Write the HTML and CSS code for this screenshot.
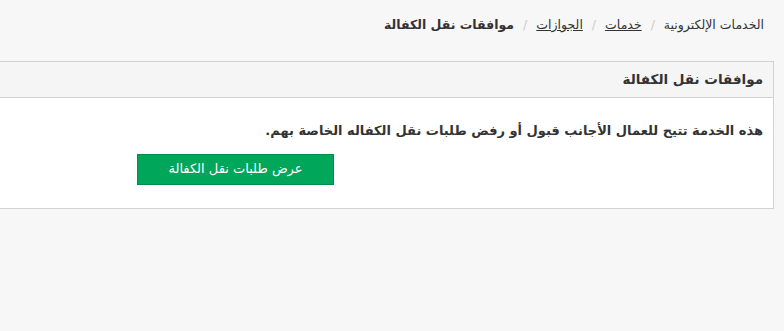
FILE: index.html
```html
<!DOCTYPE html>
<html lang="ar" dir="rtl">
<head>
<meta charset="utf-8">
<link rel="stylesheet" href="styles.css">
</head>
<body>
<div class="page">
  <ol class="breadcrumb">
    <li class="crumb">الخدمات الإلكترونية</li>
    <li class="sep">/</li>
    <li class="crumb"><a href="#">خدمات</a></li>
    <li class="sep">/</li>
    <li class="crumb"><a href="#">الجوازات</a></li>
    <li class="sep">/</li>
    <li class="crumb active">موافقات نقل الكفالة</li>
  </ol>
  <div class="panel">
    <div class="panel-heading">موافقات نقل الكفالة</div>
    <div class="panel-body">
      <p class="desc">هذه الخدمة تتيح للعمال الأجانب قبول أو رفض طلبات نقل الكفاله الخاصة بهم.</p>
      <div class="actions"><a class="btn" href="#">عرض طلبات نقل الكفالة</a></div>
    </div>
  </div>
</div>
</body>
</html>
```
FILE: styles.css
```css
html, body {
  margin: 0;
  padding: 0;
  background: #f7f7f7;
}
body {
  font-family: "DejaVu Sans", "Noto Sans", sans-serif;
  color: #333;
  direction: rtl;
}
.page {
  padding: 0 10px 0 0;
}
.breadcrumb {
  list-style: none;
  margin: 0;
  padding: 16px 10px 0 0;
  height: 61px;
  box-sizing: border-box;
  display: flex;
  gap: 9px;
  font-size: 12.5px;
  line-height: 18px;
}
.breadcrumb a {
  color: #333;
  text-decoration: underline;
}
.sep {
  color: #ccc;
}
.active {
  font-weight: bold;
}
.panel {
  margin-left: -10px;
  border: 1px solid #d2d2d2;
  background: #fff;
}
.panel-heading {
  background: #f5f5f5;
  border-bottom: 1px solid #d2d2d2;
  height: 36px;
  box-sizing: border-box;
  padding: 7px 10px 0 0;
  font-size: 13.5px;
  font-weight: bold;
  line-height: 20px;
}
.panel-body {
  padding: 23px 10px 23px 0;
}
.desc {
  margin: 0 0 13px 0;
  font-size: 13px;
  font-weight: bold;
  line-height: 20px;
}
.actions {
  display: flex;
}
.btn {
  display: inline-block;
  margin-right: 429px;
  width: 197px;
  height: 31px;
  box-sizing: border-box;
  background: #00a65a;
  border: 1px solid #008d4c;
  color: #fff;
  text-decoration: none;
  text-align: center;
  font-size: 13px;
  line-height: 28px;
}
```
